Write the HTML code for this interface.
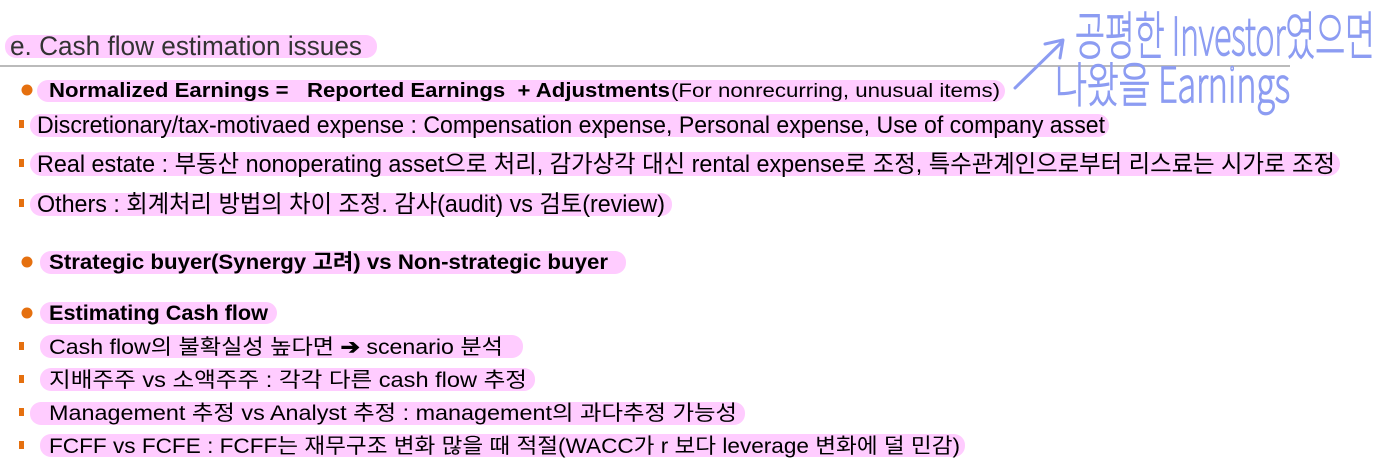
<!DOCTYPE html>
<html><head><meta charset="utf-8"><style>
html,body{margin:0;padding:0;background:#fff;width:1384px;height:469px;overflow:hidden}
svg{display:block}
text{font-family:"Liberation Sans","Noto Sans CJK KR","NanumGothic",sans-serif;fill:#000}
.b{font-weight:bold}
.h{fill:#ffccff}
.o{fill:#e5700f}
text.hw{font-family:"Noto Sans CJK KR","NanumGothic",sans-serif;fill:none;stroke:#8c9cf2;stroke-width:1.8;font-weight:100}
</style></head><body>
<svg width="1384" height="469" viewBox="0 0 1384 469" xmlns="http://www.w3.org/2000/svg">
<rect class="h" x="5" y="35" width="372" height="23" rx="11"/>
<rect class="h" x="37" y="80" width="968" height="22" rx="11"/>
<rect class="h" x="30" y="114" width="1079" height="23" rx="11"/>
<rect class="h" x="30" y="152" width="1310" height="24" rx="12"/>
<rect class="h" x="30" y="193" width="642" height="23" rx="11"/>
<rect class="h" x="40" y="251" width="586" height="23" rx="11"/>
<rect class="h" x="40" y="302" width="237" height="22" rx="11"/>
<rect class="h" x="40" y="335" width="483" height="23" rx="11"/>
<rect class="h" x="40" y="368" width="495" height="23" rx="11"/>
<rect class="h" x="30" y="402" width="715" height="23" rx="11"/>
<rect class="h" x="40" y="434" width="925" height="23" rx="11"/>
<rect x="0" y="65" width="1290" height="2" fill="#bbbbbb"/>
<circle class="o" cx="27" cy="90" r="5.5"/>
<circle class="o" cx="27" cy="262" r="5.5"/>
<circle class="o" cx="27" cy="313" r="5.5"/>
<rect class="o" x="19" y="120" width="5" height="8"/>
<rect class="o" x="19" y="159" width="5" height="8"/>
<rect class="o" x="19" y="199" width="5" height="8"/>
<rect class="o" x="19" y="342" width="5" height="8"/>
<rect class="o" x="19" y="375" width="5" height="8"/>
<rect class="o" x="19" y="408" width="5" height="8"/>
<rect class="o" x="19" y="441" width="5" height="8"/>
<text x="10" y="55" font-size="27" style="fill:#333" textLength="352" lengthAdjust="spacingAndGlyphs">e. Cash flow estimation issues</text>
<text class="b" x="49" y="97" font-size="20" textLength="621" lengthAdjust="spacingAndGlyphs" xml:space="preserve">Normalized Earnings =   Reported Earnings  + Adjustments</text>
<text x="671" y="97" font-size="19" textLength="329" lengthAdjust="spacingAndGlyphs">(For nonrecurring, unusual items)</text>
<text x="37" y="133" font-size="24" textLength="1068" lengthAdjust="spacingAndGlyphs">Discretionary/tax-motivaed expense : Compensation expense, Personal expense, Use of company asset</text>
<text x="37" y="172" font-size="24" textLength="1298" lengthAdjust="spacingAndGlyphs">Real estate : 부동산 nonoperating asset으로 처리, 감가상각 대신 rental expense로 조정, 특수관계인으로부터 리스료는 시가로 조정</text>
<text x="37" y="212" font-size="24" textLength="628" lengthAdjust="spacingAndGlyphs">Others : 회계처리 방법의 차이 조정. 감사(audit) vs 검토(review)</text>
<text class="b" x="49" y="269" font-size="21" textLength="559" lengthAdjust="spacingAndGlyphs">Strategic buyer(Synergy 고려) vs Non-strategic buyer</text>
<text class="b" x="49" y="320" font-size="21" textLength="219" lengthAdjust="spacingAndGlyphs">Estimating Cash flow</text>
<text x="49" y="354" font-size="21" textLength="454" lengthAdjust="spacingAndGlyphs">Cash flow의 불확실성 높다면 <tspan font-weight="bold">➔</tspan> scenario 분석</text>
<text x="49" y="387" font-size="21" textLength="478" lengthAdjust="spacingAndGlyphs">지배주주 vs 소액주주 : 각각 다른 cash flow 추정</text>
<text x="49" y="420" font-size="21" textLength="688" lengthAdjust="spacingAndGlyphs">Management 추정 vs Analyst 추정 : management의 과다추정 가능성</text>
<text x="49" y="453" font-size="21" textLength="911" lengthAdjust="spacingAndGlyphs">FCFF vs FCFE : FCFF는 재무구조 변화 많을 때 적절(WACC가 r 보다 leverage 변화에 덜 민감)</text>
<path d="M1015 88 L1062 42 M1045 44 L1063 40 L1060 58" fill="none" stroke="#8c9cf2" stroke-width="3" stroke-linecap="round" stroke-linejoin="round"/>
<text class="hw" x="1075" y="55" font-size="52" textLength="300" lengthAdjust="spacingAndGlyphs">공평한 Investor였으면</text>
<text class="hw" x="1055" y="102" font-size="48" textLength="235" lengthAdjust="spacingAndGlyphs">나왔을 Earnings</text>
</svg>
</body></html>
